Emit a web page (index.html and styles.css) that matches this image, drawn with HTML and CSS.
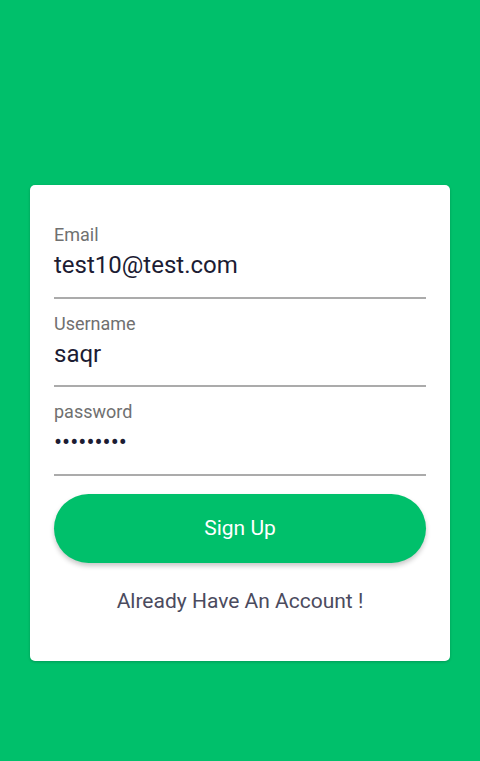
FILE: index.html
```html
<!DOCTYPE html>
<html>
<head>
<meta charset="utf-8">
<link rel="stylesheet" href="styles.css">
</head>
<body>
<div class="page">
  <form class="card">
    <label class="field">
      <span class="field-label">Email</span>
      <span class="field-value">test10@test.com</span>
    </label>
    <label class="field">
      <span class="field-label">Username</span>
      <span class="field-value">saqr</span>
    </label>
    <label class="field">
      <span class="field-label">password</span>
      <span class="field-value dots">•••••••••</span>
    </label>
    <button type="button" class="btn">Sign Up</button>
    <div class="link">Already Have An Account !</div>
  </form>
</div>
</body>
</html>
```
FILE: styles.css
```css
html, body {
  margin: 0;
  padding: 0;
}
body {
  background: #00c06b;
  font-family: Roboto, "Noto Sans", sans-serif;
}
.page {
  height: 761px;
  box-sizing: border-box;
  padding: 185px 30px 0;
}
.card {
  background: #fff;
  border-radius: 5px;
  box-shadow: 0 1px 3px rgba(0,0,0,0.2);
  padding: 25px 24px 46px;
  display: flex;
  flex-direction: column;
}
.field {
  display: flex;
  flex-direction: column;
  flex-shrink: 0;
  border-bottom: 2px solid #ababab;
  height: 88.5px;
  box-sizing: border-box;
  padding-top: 15px;
}
.field-label {
  font-size: 18px;
  line-height: 20px;
  color: #707070;
}
.field-value {
  margin-top: 4px;
  font-size: 24px;
  line-height: 32px;
  color: #1c1c33;
}
.btn {
  margin-top: 18px;
  height: 69px;
  flex-shrink: 0;
  border: none;
  border-radius: 35px;
  background: #00c06b;
  color: #fff;
  font-family: Roboto, sans-serif;
  font-size: 21px;
  box-shadow: 0 3px 5px rgba(0,0,0,0.22);
}
.link {
  margin-top: 24px;
  text-align: center;
  font-size: 21px;
  line-height: 28px;
  color: #4b4b5e;
}
```
